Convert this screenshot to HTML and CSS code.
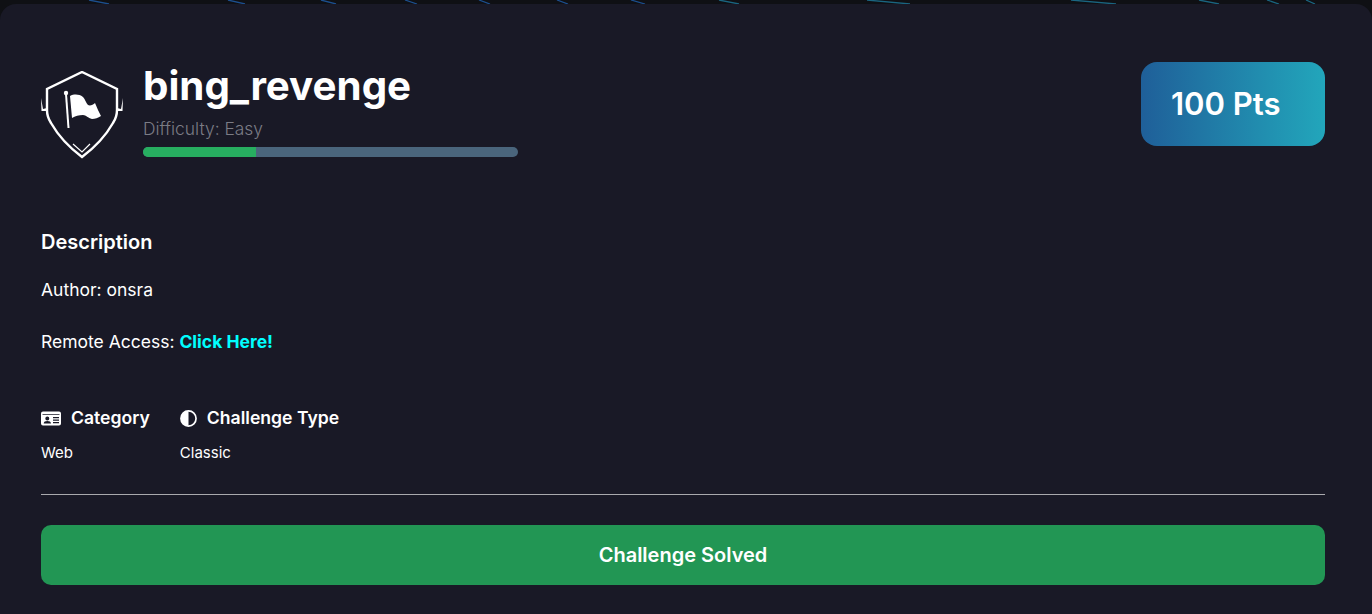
FILE: index.html
```html
<!DOCTYPE html>
<html>

<head>
    <title>bing_revenge | Challenge</title>
    <meta charset="UTF-8">
    <meta name="viewport" content="width=device-width, initial-scale=1.0">
    <link rel="stylesheet" href="styles.css">
</head>

<body>
    <svg class="streaks" viewBox="0 0 1372 4" width="1372" height="4" aria-hidden="true">
        <g class="streaks-blue">
            <path d="M89 0L109 4" />
            <path d="M228 0L245 4" />
            <path d="M321 0L336 4" />
            <path d="M405 0L417 4" />
            <path d="M479 0L490 4" />
            <path d="M557 0L568 4" />
            <path d="M631 0L645 4" />
        </g>
        <g class="streaks-teal">
            <path d="M719 0L739 4" />
            <path d="M867 0L910 4" />
            <path d="M1071 0L1116 4" />
            <path d="M1199 0L1219 4" />
            <path d="M1267 0L1279 4" />
            <path d="M1306 0L1315 4" />
        </g>
    </svg>

    <main class="card">
        <header class="challenge-head">
            <div class="challenge-title">
                <svg class="shield" viewBox="0 0 82 88" width="82" height="88" aria-hidden="true">
                    <path class="shield-line" d="M41 1L76 18V39C76 44 74 49 72 52C64 66 53 77 41 86C29 77 18 66 10 52C8 49 6 44 6 39V18Z" />
                    <path class="shield-wing" d="M0 27L2 38L6 37V40L.5 40ZM82 27L80 38L76 37V40L81.500 40Z" />
                    <path class="shield-thin" d="M32 73L41 81L49 73" />
                    <path class="shield-pole" d="M25 23L27.500 57" />
                    <circle class="shield-knob" cx="25" cy="22" r="2.200" />
                    <path class="shield-flag" d="M29 25C33 23 38 23 42 26C44 28 45 32 47 34C49 35 52 34 54 32C56 37 58 41 60 45C57 47 54 48 51 48C47 47 45 44 42 44C38 44 34 45 31 47Z" />
                </svg>
                <div class="title-text">
                    <h1>bing_revenge</h1>
                    <p class="difficulty">Difficulty: Easy</p>
                    <div class="difficulty-bar">
                        <div class="difficulty-fill" style="width: 30%"></div>
                    </div>
                </div>
            </div>
            <div class="points">100 Pts</div>
        </header>

        <section class="description">
            <h2>Description</h2>
            <p>Author: onsra</p>
            <p>Remote Access: <a href="#">Click Here!</a></p>
        </section>

        <section class="meta">
            <div class="meta-item">
                <h3>
                    <svg viewBox="0 0 20 16" width="20" height="16" aria-hidden="true">
                        <path fill="#fff" fill-rule="evenodd" d="M2 1.500H18A2 2 0 0 1 20 3.500V13.500A2 2 0 0 1 18 15.500H2A2 2 0 0 1 0 13.500V3.500A2 2 0 0 1 2 1.500ZM1.500 4.200V5H18.500V4.200ZM12 7V8.200H18V7ZM12 9.500V10.700H18V9.500ZM12 12V13.200H18V12ZM6.300 6.500A2 2 0 1 0 6.301 10.500A2 2 0 1 0 6.300 6.500ZM2.700 13.500H10C10 11.800 8.500 11 6.300 11C4.200 11 2.700 11.800 2.700 13.500Z" />
                    </svg>
                    Category
                </h3>
                <p>Web</p>
            </div>
            <div class="meta-item">
                <h3>
                    <svg viewBox="0 0 18 18" width="17" height="17" aria-hidden="true">
                        <circle cx="9" cy="9" r="8" fill="none" stroke="#fff" stroke-width="1.800" />
                        <path fill="#fff" d="M9 1A8 8 0 0 0 9 17Z" />
                    </svg>
                    Challenge Type
                </h3>
                <p>Classic</p>
            </div>
        </section>

        <hr class="divider">

        <button class="solved" type="button">Challenge Solved</button>
    </main>
</body>

</html>
```

FILE: styles.css
```css
html {
    font-size: 16px;
    font-family: 'Inter', 'Liberation Sans', sans-serif;
}

body {
    margin: 0;
    height: 614px;
    overflow: hidden;
    background-color: #0f1014;
    color: #fff;
    position: relative;
}

h1,
h2,
h3,
p {
    margin: 0;
}

.streaks {
    position: absolute;
    top: 0;
    left: 0;
    fill: none;
    stroke-width: 1.300;
}

.streaks-blue {
    stroke: #1c4f8e;
}

.streaks-teal {
    stroke: #1a6580;
}

.card {
    margin-top: 4px;
    height: 610px;
    box-sizing: border-box;
    padding: 58px 47px 0 41px;
    background-color: #191926;
    border-radius: 16px 16px 0 0;
}

.challenge-head {
    display: flex;
    justify-content: space-between;
    align-items: flex-start;
    height: 95px;
}

.challenge-title {
    display: flex;
    gap: 20px;
}

.shield {
    margin-top: 9px;
    flex: none;
}

.shield-line {
    fill: none;
    stroke: #fff;
    stroke-width: 2.400;
    stroke-linejoin: miter;
}

.shield-wing {
    fill: #fff;
}

.shield-thin {
    fill: none;
    stroke: #fff;
    stroke-width: 1.200;
}

.shield-pole {
    fill: none;
    stroke: #fff;
    stroke-width: 2;
}

.shield-knob,
.shield-flag {
    fill: #fff;
}

.title-text {
    width: 375px;
}

.title-text h1 {
    font-size: 40.300px;
    line-height: 50px;
    font-weight: 700;
    margin-top: -1px;
}

.difficulty {
    margin-top: 6px;
    font-size: 17.400px;
    line-height: 24px;
    font-weight: 300;
    color: #7b7c85;
}

.difficulty-bar {
    margin-top: 6px;
    height: 10px;
    border-radius: 5px;
    overflow: hidden;
    background-color: #4a657c;
}

.difficulty-fill {
    height: 100%;
    background-color: #27ae60;
}

.points {
    width: 184px;
    height: 84px;
    box-sizing: border-box;
    padding: 0 0 2px 30px;
    display: flex;
    align-items: center;
    border-radius: 16px;
    background: linear-gradient(90deg, #1f5f99, #22a6bb);
    font-size: 31px;
    font-weight: 600;
}

.description {
    margin-top: 71px;
}

.description h2 {
    font-size: 20px;
    line-height: 28px;
    font-weight: 600;
}

.description p {
    margin-top: 22px;
    font-size: 17.500px;
    line-height: 24px;
}

.description p + p {
    margin-top: 28px;
}

.description a {
    color: #00ffff;
    font-weight: 700;
    text-decoration: none;
}

.meta {
    display: flex;
    gap: 30px;
    margin-top: 50px;
}

.meta-item h3 {
    display: flex;
    align-items: center;
    gap: 10px;
    font-size: 17.600px;
    line-height: 28px;
    font-weight: 600;
}

.meta-item p {
    margin-top: 11px;
    font-size: 15px;
    line-height: 20px;
}

.divider {
    margin: 31px 0 0;
    border: none;
    border-top: 1px solid #a9a9ad;
}

.solved {
    display: block;
    width: 100%;
    height: 60px;
    margin-top: 30px;
    border: none;
    border-radius: 10px;
    background-color: #229654;
    color: #fff;
    font-family: inherit;
    font-size: 20px;
    font-weight: 600;
    cursor: pointer;
}
```
